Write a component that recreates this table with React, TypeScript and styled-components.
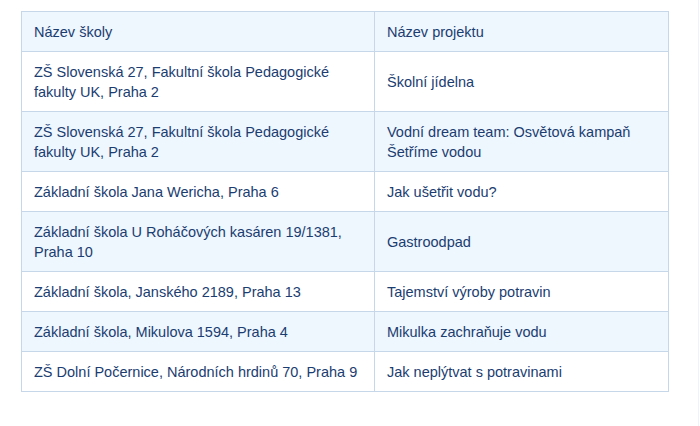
import styled, { createGlobalStyle } from 'styled-components';

const rows = [
    { school: 'ZŠ Slovenská 27, Fakultní škola Pedagogické fakulty UK, Praha 2', project: 'Školní jídelna' },
    {
        school: 'ZŠ Slovenská 27, Fakultní škola Pedagogické fakulty UK, Praha 2',
        project: 'Vodní dream team: Osvětová kampaň Šetříme vodou',
    },
    { school: 'Základní škola Jana Wericha, Praha 6', project: 'Jak ušetřit vodu?' },
    { school: 'Základní škola U Roháčových kasáren 19/1381, Praha 10', project: 'Gastroodpad' },
    { school: 'Základní škola, Janského 2189, Praha 13', project: 'Tajemství výroby potravin' },
    { school: 'Základní škola, Mikulova 1594, Praha 4', project: 'Mikulka zachraňuje vodu' },
    { school: 'ZŠ Dolní Počernice, Národních hrdinů 70, Praha 9', project: 'Jak neplýtvat s potravinami' },
];

const GlobalStyle = createGlobalStyle`
    body {
        margin: 0;
        background: #ffffff;
        font-family: 'Liberation Sans', Arial, sans-serif;
    }
`;

const Page = styled.div`
    width: 699px;
    height: 426px;
    box-sizing: border-box;
    padding: 11px 0 0 21px;
    border-right: 1px solid #eef3f9;
`;

const Table = styled.table`
    width: 648px;
    border-collapse: collapse;
    table-layout: fixed;
    font-size: 14.5px;
    line-height: 20px;
    color: #1b3d70;
`;

const Cell = styled.td<{ $shaded?: boolean }>`
    border: 1px solid #c6d7e9;
    padding: 9.5px 12px;
    text-align: left;
    vertical-align: middle;
    font-weight: normal;
    background: ${(p) => (p.$shaded ? '#eef6fe' : '#ffffff')};
`;

const App = () => {
    return (
        <>
            <GlobalStyle />
            <Page>
                <Table>
                    <colgroup>
                        <col style={{ width: 353 }} />
                        <col />
                    </colgroup>
                    <thead>
                        <tr>
                            <Cell as="th" $shaded>
                                Název školy
                            </Cell>
                            <Cell as="th" $shaded>
                                Název projektu
                            </Cell>
                        </tr>
                    </thead>
                    <tbody>
                        {rows.map((row, i) => (
                            <tr key={i}>
                                <Cell $shaded={i % 2 === 1}>{row.school}</Cell>
                                <Cell $shaded={i % 2 === 1}>{row.project}</Cell>
                            </tr>
                        ))}
                    </tbody>
                </Table>
            </Page>
        </>
    );
};

export default App;
